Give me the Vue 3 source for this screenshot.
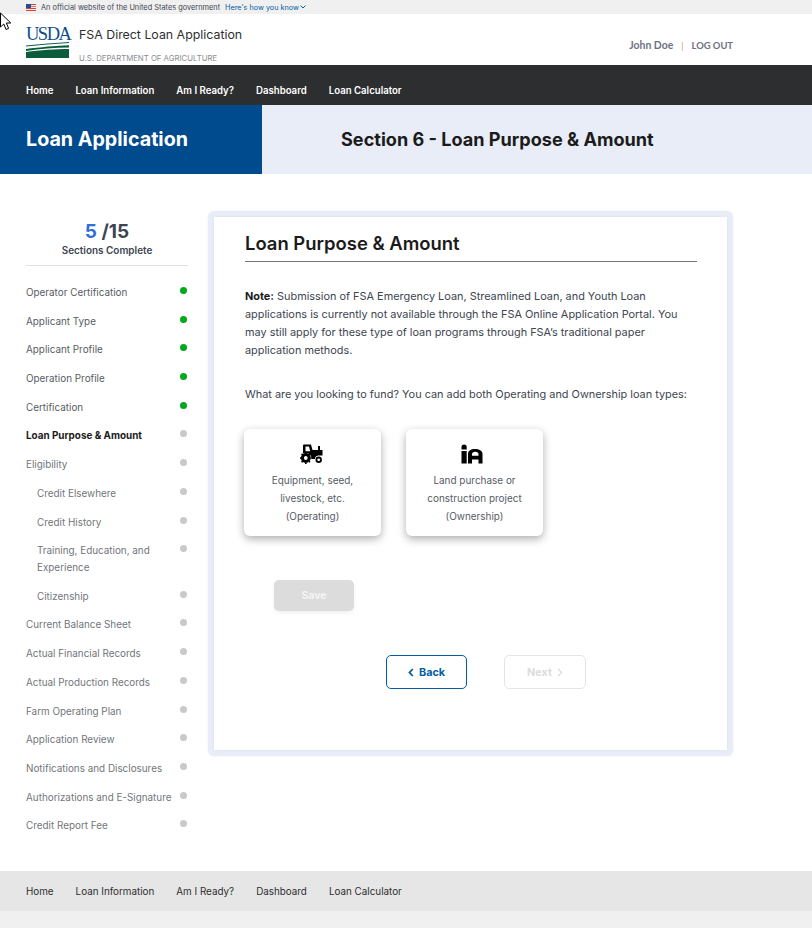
<template>
  <div class="page">
    <svg class="cursor" width="12" height="20" viewBox="0 0 12 20">
      <path d="M0.5 1 L0.5 15 L3.8 12 L6 17.5 L8.6 16.4 L6.4 11 L10.8 11 Z" fill="#fff" stroke="#000" stroke-width="1" />
    </svg>
    <div class="gov">
      <svg class="flag" width="10" height="7" viewBox="0 0 10 7">
        <rect width="10" height="7" fill="#e8e8ee" />
        <rect width="10" height="1" fill="#d8453c" />
        <rect y="2" width="10" height="1" fill="#e5776f" />
        <rect y="4" width="10" height="1" fill="#d8453c" />
        <rect y="6" width="10" height="1" fill="#d8453c" />
        <rect width="5" height="4" fill="#2f4a8c" />
      </svg>
      <span class="gov-text">An official website of the United States government</span>
      <span class="gov-link">Here's how you know</span>
      <svg width="6" height="4" viewBox="0 0 6 4"><path d="M0.6 0.6 L3 3 L5.4 0.6" fill="none" stroke="#005ea2" stroke-width="1" /></svg>
    </div>

    <header class="top">
      <div class="logo">
        <div class="logo-word">USDA</div>
        <svg width="43" height="16" viewBox="0 0 43 16" class="logo-field">
          <path d="M0 3.5 C14 2 30 1 43 0 L43 1 C28 2 14 3 0 4.5 Z" fill="#0b5c3c" />
          <path d="M0 7 C14 5 30 3.8 43 3.2 L43 5.5 C28 5.5 14 7 0 9 Z" fill="#0b5c3c" />
          <path d="M0 10 C14 8 30 7 43 7 L43 16 L0 16 Z" fill="#0b5c3c" />
        </svg>
      </div>
      <div class="brand">
        <div class="brand-name">FSA Direct Loan Application</div>
        <div class="brand-dept">U.S. DEPARTMENT OF AGRICULTURE</div>
      </div>
      <div class="user">
        <span class="user-name">John Doe</span>
        <span class="sep">|</span>
        <span>LOG OUT</span>
      </div>
    </header>

    <nav class="nav">
      <a v-for="l in links" :key="l">{{ l }}</a>
    </nav>

    <div class="band">
      <div class="band-left">Loan Application</div>
      <div class="band-right">Section 6 - Loan Purpose &amp; Amount</div>
    </div>

    <div class="main">
      <aside class="side">
        <div class="count"><span class="done">5</span> /15</div>
        <div class="count-label">Sections Complete</div>
        <ul class="steps">
          <li v-for="s in steps" :key="s.name" :class="{ sub: s.sub, current: s.current, tall: s.tall }">
            <span class="step-name" :class="s.state">{{ s.name }}</span>
            <i class="dot" :class="{ ok: s.state === 'ok' }"></i>
          </li>
        </ul>
      </aside>

      <section class="frame">
        <div class="card">
          <h2>Loan Purpose &amp; Amount</h2>
          <p class="note"><b>Note:</b> Submission of FSA Emergency Loan, Streamlined Loan, and Youth Loan applications is currently not available through the FSA Online Application Portal. You may still apply for these type of loan programs through FSA’s traditional paper application methods.</p>
          <p class="ask">What are you looking to fund? You can add both Operating and Ownership loan types:</p>
          <div class="tiles">
            <div class="tile">
              <svg class="tractor" width="23" height="20" viewBox="0 0 23 20">
                <path d="M4 0.5 H11 L12.5 6 H18 V2 H20 V6 H22.5 V11.5 H19 A4 4 0 0 0 14.8 15 H11.5 A6 6 0 0 0 3 9.2 V1.5 A1 1 0 0 1 4 0.5 Z M5.5 2.6 V7.2 H10.2 L9 2.6 Z" fill="#000" fill-rule="evenodd" />
                <circle cx="5.8" cy="14" r="3.4" fill="none" stroke="#000" stroke-width="3" />
                <path d="M5.8 8 V20 M0 14 H11.6 M1.6 9.8 L10 18.2 M10 9.8 L1.6 18.2" stroke="#000" stroke-width="1.6" stroke-dasharray="1.8 8.6" />
                <circle cx="18.7" cy="15.8" r="2.3" fill="none" stroke="#000" stroke-width="1.8" />
              </svg>
              <div>Equipment, seed,<br />livestock, etc.<br />(Operating)</div>
            </div>
            <div class="tile">
              <svg class="silo" width="22" height="20" viewBox="0 0 22 20">
                <path d="M0.5 3 A2.6 2.6 0 0 1 5.7 3 V5.6 H0.5 Z M0.5 7 H5.7 V19.5 H0.5 Z" fill="#000" />
                <path d="M7 19.5 V10 C7 6.5 10 5 14 5 C18 5 21.5 6.5 21.5 10 V19.5 H17.5 V15.5 H11 V19.5 Z M11 11.8 H17.5 V10.5 A3.2 2.6 0 0 0 11 10.5 Z" fill="#000" fill-rule="evenodd" />
              </svg>
              <div>Land purchase or<br />construction project<br />(Ownership)</div>
            </div>
          </div>
          <button class="save" type="button">Save</button>
          <div class="pager">
            <button class="back" type="button">
              <svg width="6" height="9" viewBox="0 0 6 9"><path d="M4.8 1 L1.5 4.5 L4.8 8" fill="none" stroke="#005ea2" stroke-width="1.8" /></svg>
              Back
            </button>
            <button class="next" type="button">
              Next
              <svg width="6" height="9" viewBox="0 0 6 9"><path d="M1.2 1 L4.5 4.5 L1.2 8" fill="none" stroke="#dcdcdc" stroke-width="1.4" /></svg>
            </button>
          </div>
        </div>
      </section>
    </div>

    <footer class="foot">
      <a v-for="l in links" :key="l">{{ l }}</a>
    </footer>
    <div class="foot-end"></div>
  </div>
</template>

<script setup>
const links = ["Home", "Loan Information", "Am I Ready?", "Dashboard", "Loan Calculator"];

const steps = [
  { name: "Operator Certification", state: "ok" },
  { name: "Applicant Type", state: "ok" },
  { name: "Applicant Profile", state: "ok" },
  { name: "Operation Profile", state: "ok" },
  { name: "Certification", state: "ok" },
  { name: "Loan Purpose & Amount", current: true },
  { name: "Eligibility" },
  { name: "Credit Elsewhere", sub: true },
  { name: "Credit History", sub: true },
  { name: "Training, Education, and Experience", sub: true, tall: true },
  { name: "Citizenship", sub: true },
  { name: "Current Balance Sheet" },
  { name: "Actual Financial Records" },
  { name: "Actual Production Records" },
  { name: "Farm Operating Plan" },
  { name: "Application Review" },
  { name: "Notifications and Disclosures" },
  { name: "Authorizations and E-Signature" },
  { name: "Credit Report Fee" },
];
</script>

<style>
body {
  margin: 0;
  background: #fff;
}
</style>

<style scoped>
.page {
  position: relative;
  width: 812px;
  height: 928px;
  overflow: hidden;
  font-family: Inter, "Noto Sans", sans-serif;
  color: #1b1b1b;
}
.cursor {
  position: absolute;
  left: 0;
  top: 12px;
}
.gov {
  height: 14px;
  background: #f0f0f0;
  display: flex;
  align-items: center;
  padding-left: 26px;
  font-size: 7.38px;
  color: #3d4551;
}
.flag {
  margin-right: 5px;
}
.gov-link {
  color: #005ea2;
  margin-left: 5px;
  margin-right: 1px;
  font-size: 7.25px;
}
.top {
  height: 51px;
  display: flex;
  padding-left: 26px;
  box-sizing: border-box;
}
.logo {
  width: 43px;
  padding-top: 13px;
  margin-right: 10px;
}
.logo-word {
  font-family: "Liberation Serif", serif;
  font-size: 18.5px;
  line-height: 15px;
  letter-spacing: -1.5px;
  white-space: nowrap;
  color: #0b4d8c;
}
.logo-field {
  display: block;
}
.brand {
  padding-top: 13px;
}
.brand-name {
  font-size: 12.37px;
  line-height: 15px;
  color: #2d2e2f;
}
.brand-dept {
  font-size: 7.77px;
  line-height: 10px;
  margin-top: 11px;
  color: #8a8d90;
}
.user {
  margin-left: auto;
  margin-right: 79px;
  padding-top: 25px;
  font-family: Lato, sans-serif;
  font-size: 9.4px;
  font-weight: 700;
  line-height: 13px;
  color: #6b7280;
  display: flex;
  gap: 8px;
}
.user-name {
  font-size: 10.4px;
}
.sep {
  font-weight: 400;
  color: #c9a36a;
}
.nav {
  height: 40px;
  background: #2d2e2f;
  display: flex;
  gap: 22px;
  padding: 19px 0 0 26px;
  box-sizing: border-box;
  font-size: 9.65px;
  font-weight: 600;
  line-height: 13px;
  color: #fff;
}
.band {
  height: 69px;
  display: flex;
  align-items: center;
}
.band-left {
  width: 262px;
  height: 100%;
  box-sizing: border-box;
  padding-left: 26px;
  background: #004b8d;
  color: #fff;
  font-size: 19.7px;
  font-weight: 700;
  line-height: 69px;
}
.band-right {
  flex: 1;
  height: 100%;
  background: #e9edf7;
  padding-left: 79px;
  font-size: 18.1px;
  font-weight: 700;
  line-height: 69px;
  color: #1b1b1b;
}
.main {
  height: 697px;
  display: flex;
  padding-left: 26px;
  box-sizing: border-box;
}
.side {
  width: 162px;
  margin-right: 20px;
  padding-top: 46px;
}
.count {
  text-align: center;
  font-size: 19px;
  font-weight: 700;
  line-height: 24px;
  color: #3d4551;
}
.done {
  color: #2f6fd6;
}
.count-label {
  text-align: center;
  font-size: 9.95px;
  font-weight: 600;
  line-height: 13px;
  color: #3d4551;
  padding-bottom: 8px;
  border-bottom: 1px solid #dfe1e2;
}
.steps {
  list-style: none;
  margin: 10px 0 0;
  padding: 0;
}
.steps li {
  min-height: 28.7px;
  display: flex;
  justify-content: space-between;
  box-sizing: border-box;
  padding-top: 8px;
  font-size: 9.9px;
  line-height: 17px;
}
.steps li.tall {
  min-height: 45.6px;
}
.steps li.sub .step-name {
  padding-left: 11px;
  max-width: 120px;
}
.step-name {
  color: #71767a;
}
.step-name.ok {
  color: #565c65;
}
.current .step-name {
  font-weight: 700;
  color: #1b1b1b;
}
.dot {
  flex: none;
  width: 7px;
  height: 7px;
  margin: 3px 1px 0 0;
  border-radius: 50%;
  background: #c9c9c9;
}
.dot.ok {
  background: #00a91c;
}
.frame {
  width: 525px;
  height: 545px;
  margin-top: 37px;
  box-sizing: border-box;
  padding: 6px;
  border-radius: 6px;
  background: #e9edf7;
  box-shadow: 0 0 2px #e9edf7;
}
.card {
  height: 533px;
  box-sizing: border-box;
  background: #fff;
  padding: 15px 30px 0 31px;
  box-shadow: 0 0 3px #d9deea;
}
h2 {
  margin: 0;
  font-size: 18.45px;
  font-weight: 600;
  line-height: 23px;
  padding-bottom: 6px;
  border-bottom: 1px solid #71767a;
}
.note {
  margin: 25px 0 0;
  font-size: 10.9px;
  line-height: 18px;
  color: #3d4551;
}
.note b {
  color: #1b1b1b;
}
.ask {
  margin: 26px 0 0;
  font-size: 10.9px;
  line-height: 18px;
  color: #3d4551;
}
.tiles {
  display: flex;
  gap: 25px;
  margin: 26px 0 0 -1px;
}
.tile {
  width: 137px;
  height: 107px;
  box-sizing: border-box;
  padding-top: 15px;
  border-radius: 6px;
  background: #fff;
  box-shadow: 0 3px 8px rgba(0, 0, 0, 0.32);
  text-align: center;
  font-size: 9.95px;
  line-height: 18px;
  color: #565c65;
}
.tile svg {
  display: block;
  margin-bottom: 7px;
}
.tile .tractor {
  margin-left: 56px;
}
.tile .silo {
  margin-left: 55px;
}
.save {
  display: block;
  width: 80px;
  height: 31px;
  margin: 44px 0 0 29px;
  border: 0;
  border-radius: 5px;
  background: #dcdcdc;
  color: #f4f4f4;
  font: 700 10.5px Inter, sans-serif;
  box-shadow: 0 2px 4px rgba(0, 0, 0, 0.06);
}
.pager {
  display: flex;
  gap: 37px;
  margin: 44px 0 0 141px;
}
.pager button {
  width: 81px;
  height: 34px;
  display: flex;
  align-items: center;
  justify-content: center;
  gap: 5px;
  border-radius: 5px;
  background: #fff;
  font: 700 10.8px Inter, sans-serif;
}
.back {
  border: 1px solid #005ea2;
  color: #005ea2;
}
.pager .next {
  width: 82px;
  border: 1px solid #e4e4e4;
  color: #dcdcdc;
}
.foot {
  height: 40px;
  background: #e6e6e6;
  display: flex;
  gap: 22px;
  padding-left: 26px;
  align-items: center;
  font-size: 9.85px;
  color: #2d2e2f;
}
.foot-end {
  height: 17px;
  background: #f0f0f0;
}
</style>
